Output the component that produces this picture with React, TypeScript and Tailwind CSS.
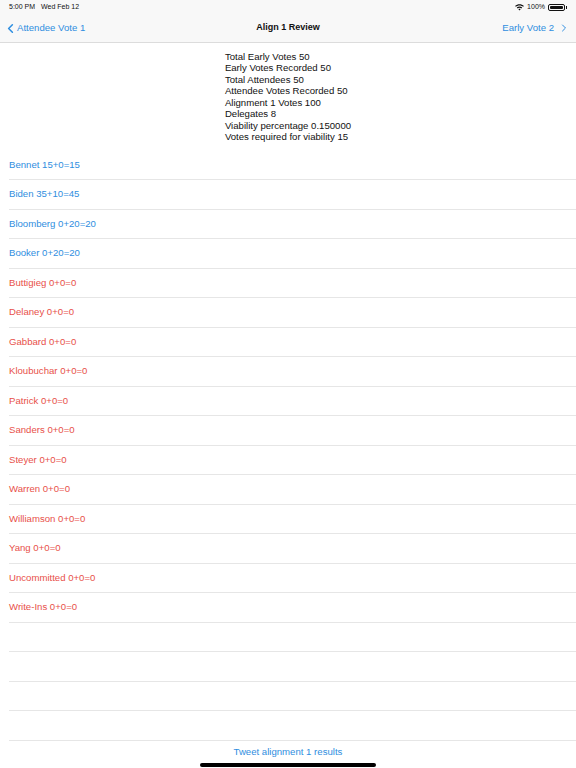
import { ChevronLeft, ChevronRight } from 'lucide-react'

const summary = [
  'Total Early Votes 50',
  'Early Votes Recorded 50',
  'Total Attendees 50',
  'Attendee Votes Recorded 50',
  'Alignment 1 Votes 100',
  'Delegates 8',
  'Viability percentage 0.150000',
  'Votes required for viability 15',
]

const candidates = [
  { name: 'Bennet 15+0=15', viable: true },
  { name: 'Biden 35+10=45', viable: true },
  { name: 'Bloomberg 0+20=20', viable: true },
  { name: 'Booker 0+20=20', viable: true },
  { name: 'Buttigieg 0+0=0', viable: false },
  { name: 'Delaney 0+0=0', viable: false },
  { name: 'Gabbard 0+0=0', viable: false },
  { name: 'Kloubuchar 0+0=0', viable: false },
  { name: 'Patrick 0+0=0', viable: false },
  { name: 'Sanders 0+0=0', viable: false },
  { name: 'Steyer 0+0=0', viable: false },
  { name: 'Warren 0+0=0', viable: false },
  { name: 'Williamson 0+0=0', viable: false },
  { name: 'Yang 0+0=0', viable: false },
  { name: 'Uncommitted 0+0=0', viable: false },
  { name: 'Write-Ins 0+0=0', viable: false },
]

function Wifi() {
  return (
    <svg width="9" height="7" viewBox="0 0 18 13" fill="#111">
      <path d="M9 0C5.6 0 2.5 1.3 0.2 3.4l1.6 1.7C3.7 3.4 6.2 2.3 9 2.3s5.3 1.1 7.2 2.8l1.6-1.7C15.5 1.3 12.4 0 9 0z" />
      <path d="M9 4.6c-2.1 0-4 .8-5.4 2.1l1.6 1.7C6.2 7.5 7.5 6.9 9 6.9s2.8.6 3.8 1.5l1.6-1.7C13 5.4 11.1 4.6 9 4.6z" />
      <path d="M9 9.2c-.9 0-1.6.3-2.2.9L9 12.6l2.2-2.5c-.6-.6-1.3-.9-2.2-.9z" />
    </svg>
  )
}

function Battery() {
  return (
    <div className="flex items-center">
      <div className="w-[17px] h-[7px] rounded-[2px] border border-[#111] p-[1px]">
        <div className="w-full h-full bg-[#111] rounded-[1px]" />
      </div>
      <div className="w-[1px] h-[3px] bg-[#111] ml-[1px]" />
    </div>
  )
}

export default function App() {
  return (
    <div className="w-[576px] h-[768px] bg-white flex flex-col overflow-hidden" style={{ fontFamily: '"Liberation Sans", Roboto, sans-serif' }}>
      <header className="bg-[#f8f8f8] border-b border-[#dcdcdc] h-[43px] shrink-0 flex flex-col">
        <div className="h-[14px] flex items-center justify-between px-[9px] pt-[1px] text-[7px] text-[#111]">
          <div className="flex gap-[6px]">
            <span>5:00 PM</span>
            <span>Wed Feb 12</span>
          </div>
          <div className="flex items-center gap-[3px]">
            <Wifi />
            <span>100%</span>
            <Battery />
          </div>
        </div>
        <div className="flex-1 grid grid-cols-3 items-center px-[6px] text-[9.6px]">
          <div className="flex items-center text-[#2f8ee0]">
            <ChevronLeft size={15} strokeWidth={2.5} className="-ml-[3px] -mr-[1px]" />
            <span>Attendee Vote 1</span>
          </div>
          <div className="text-center font-bold text-[#111] text-[9px]">Align 1 Review</div>
          <div className="flex items-center justify-end text-[#2f8ee0]">
            <span>Early Vote 2</span>
            <ChevronRight size={12} strokeWidth={2} className="ml-[4px]" />
          </div>
        </div>
      </header>

      <div className="flex justify-center pt-[8px] pb-[8px] shrink-0">
        <div className="text-[9.6px] leading-[11.45px] text-[#111]">
          {summary.map((line) => (
            <div key={line}>{line}</div>
          ))}
        </div>
      </div>

      <div className="flex-1 flex flex-col pl-[9px]">
        {candidates.map((c) => (
          <div key={c.name} className="h-[29.5px] shrink-0 border-b border-[#e6e6e6] flex items-center">
            <span className={`text-[9.6px] ${c.viable ? 'text-[#2f8ee0]' : 'text-[#e8504a]'}`}>{c.name}</span>
          </div>
        ))}
        {[0, 1, 2, 3].map((i) => (
          <div key={i} className="h-[29.5px] shrink-0 border-b border-[#e6e6e6]" />
        ))}
      </div>

      <footer className="h-[28px] shrink-0 flex flex-col items-center">
        <div className="text-[9.6px] text-[#2f8ee0] mt-[4px]">Tweet alignment 1 results</div>
        <div className="w-[176px] h-[4px] rounded-full bg-black mt-[4px]" />
      </footer>
    </div>
  )
}
